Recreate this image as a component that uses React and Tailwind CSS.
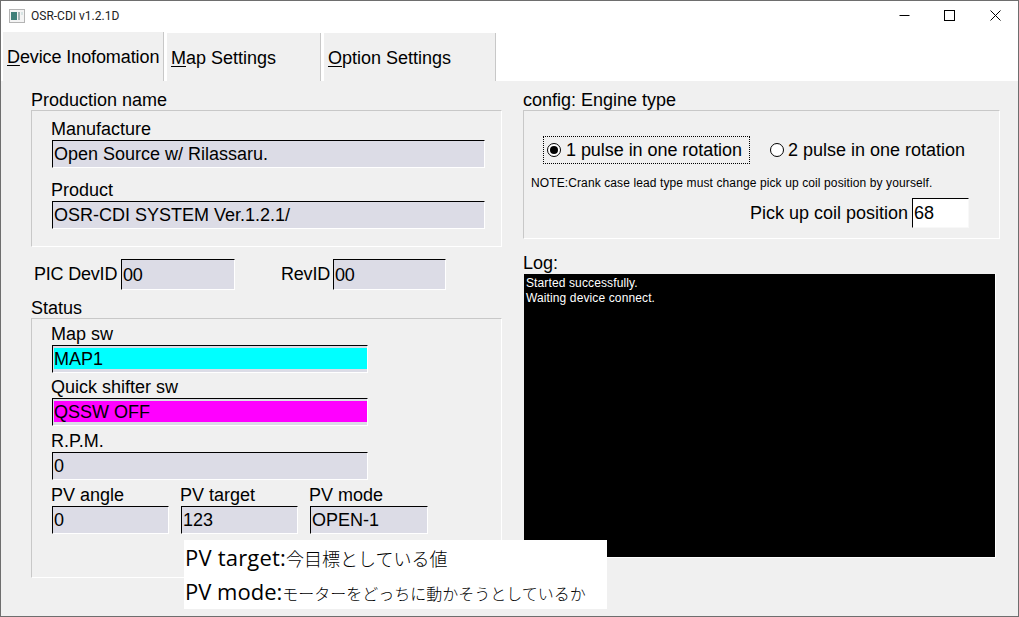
import React from "react";

const FONT = "font-['Liberation_Sans',Arial,sans-serif]";

const Field = ({ value, color, className = "h-[28px]", width }) => (
  <div
    className={`flex items-center border border-t-black border-l-black border-r-white border-b-white bg-[#dcdce6] pl-[1px] text-[18px] leading-none text-black ${className} ${width}`}
  >
    {color ? (
      <div className={`mb-[1px] flex h-[21px] w-full items-center ${color}`}>{value}</div>
    ) : (
      value
    )}
  </div>
);

const Group = ({ title, className, children }) => (
  <div>
    <div className="h-[20px] text-[18px] leading-[20px] text-black">{title}</div>
    <div
      className={`border border-t-[#c8c8c8] border-l-[#c8c8c8] border-r-white border-b-white ${className}`}
    >
      {children}
    </div>
  </div>
);

const Label = ({ children, className = "h-[20px] leading-[18px]" }) => (
  <div className={`-ml-[1px] text-[18px] text-black ${className}`}>{children}</div>
);

const Tab = ({ letter, rest, className }) => (
  <div
    className={`flex items-center border-r border-r-[#c8c8c8] bg-[#f0f0f0] pt-[2px] text-[18px] text-black ${className}`}
  >
    <span className="underline underline-offset-2">{letter}</span>
    {rest}
  </div>
);

const App = () => {
  return (
    <div
      className={`relative flex h-[617px] w-[1019px] flex-col overflow-hidden border border-[#6e6e6e] bg-white ${FONT}`}
    >
      {/* Title bar */}
      <div className="flex h-[31px] shrink-0 items-center bg-white pb-[2px] pl-[8px]">
        <svg width="16" height="14" viewBox="0 0 16 14" className="mr-[6px]">
          <rect x="0.5" y="0.5" width="15" height="13" fill="#f4f4f4" stroke="#b4b4b4" />
          <rect x="2" y="3" width="6" height="8" fill="#3f7f78" />
          <rect x="9" y="3" width="2" height="8" fill="#a4b4b4" />
          <rect x="12" y="3" width="2" height="3" fill="#d8e4e4" />
        </svg>
        <span className="font-['Roboto',sans-serif] text-[12px] text-[#222]">OSR-CDI v1.2.1D</span>
        <div className="ml-auto flex items-center pr-[17px]">
          <svg width="11" height="11" viewBox="0 0 11 11" className="mr-[34px]">
            <path d="M0.5 5.5H10.5" stroke="#000" fill="none" />
          </svg>
          <svg width="11" height="11" viewBox="0 0 11 11" className="mr-[35px]">
            <rect x="0.5" y="0.5" width="10" height="10" stroke="#000" fill="none" />
          </svg>
          <svg width="11" height="11" viewBox="0 0 11 11">
            <path d="M0.5 0.5L10.5 10.5M10.5 0.5L0.5 10.5" stroke="#000" fill="none" />
          </svg>
        </div>
      </div>

      {/* Tabs */}
      <div className="flex h-[49px] shrink-0 items-end bg-white pl-[2px]">
        <Tab
          letter="D"
          rest="evice Inofomation"
          className="h-[49px] w-[161px] pl-[4px] tracking-[-0.1px]"
        />
        <Tab letter="M" rest="ap Settings" className="ml-[3px] h-[48px] w-[154px] pl-[4px]" />
        <Tab letter="O" rest="ption Settings" className="ml-[3px] h-[48px] w-[172px] pl-[4px]" />
      </div>

      {/* Page */}
      <div className="flex flex-1 bg-[#f0f0f0] pl-[30px] pt-[9px]">
        {/* Left column */}
        <div className="w-[471px]">
          <Group title="Production name" className="h-[137px] pl-[20px] pt-[9px]">
            <Label>Manufacture</Label>
            <Field value="Open Source w/ Rilassaru." width="w-[433px]" />
            <Label className="mt-[11px] h-[22px] leading-[22px]">Product</Label>
            <Field value="OSR-CDI SYSTEM Ver.1.2.1/" width="w-[433px]" />
          </Group>

          <div className="mt-[12px] flex h-[31px] items-center pl-[3px] text-[18px] tracking-[-0.2px] text-black">
            <span className="w-[87px]">PIC DevID</span>
            <Field value="00" className="h-[31px]" width="w-[114px]" />
            <span className="ml-[46px] w-[52px]">RevID</span>
            <Field value="00" className="h-[31px]" width="w-[113px]" />
          </div>

          <div className="mt-[8px]">
            <Group title="Status" className="h-[260px] pl-[20px] pt-[6px]">
              <Label>Map sw</Label>
              <Field value="MAP1" color="bg-[#00ffff]" width="w-[316px]" />
              <Label className="mt-[3px] h-[22px] leading-[22px]">Quick shifter sw</Label>
              <Field value="QSSW OFF" color="bg-[#ff00ff]" width="w-[316px]" />
              <Label className="mt-[4px] h-[22px] leading-[22px]">R.P.M.</Label>
              <Field value="0" width="w-[316px]" />
              <div className="mt-[5px] flex">
                <div className="w-[129px]">
                  <Label className="h-[21px] leading-[21px]">PV angle</Label>
                  <Field value="0" width="w-[117px]" />
                </div>
                <div className="w-[129px]">
                  <Label className="h-[21px] leading-[21px]">PV target</Label>
                  <Field value="123" width="w-[117px]" />
                </div>
                <div className="w-[118px]">
                  <Label className="h-[21px] leading-[21px]">PV mode</Label>
                  <Field value="OPEN-1" width="w-[118px]" />
                </div>
              </div>
            </Group>
          </div>
        </div>

        {/* Right column */}
        <div className="ml-[21px] w-[477px]">
          <Group title="config: Engine type" className="h-[129px] pt-[24px]">
            <div className="flex items-center pl-[19px] text-[18px] text-black">
              <div className="flex h-[28px] w-[207px] items-center border border-dotted border-black pl-[3px]">
                <span className="mr-[5px] flex h-[14px] w-[14px] items-center justify-center rounded-full border border-black bg-white">
                  <span className="h-[8px] w-[8px] rounded-full bg-black" />
                </span>
                <span className="pt-[2px] tracking-[-0.05px]">1 pulse in one rotation</span>
              </div>
              <span className="ml-[20px] mr-[4px] h-[14px] w-[14px] rounded-full border border-black bg-white" />
              <span className="pt-[2px]">2 pulse in one rotation</span>
            </div>
            <div className="mt-[11px] whitespace-nowrap pl-[7px] text-[12px] leading-[16px] tracking-[0.11px] text-black">
              NOTE:Crank case lead type must change pick up coil position by yourself.
            </div>
            <div className="mt-[7px] flex items-center justify-end pr-[30px] text-[18px] text-black">
              <span className="mr-[4px]">Pick up coil position</span>
              <div className="flex h-[30px] w-[57px] items-center border border-t-black border-l-black border-r-[#f8f8f8] border-b-[#f8f8f8] bg-white pl-[1px]">
                68
              </div>
            </div>
          </Group>

          <div className="mt-[14px] h-[20px] text-[18px] leading-[20px] text-black">Log:</div>
          <div className="h-[285px] w-[473px] border border-t-[#f0f0f0] border-l-[#f0f0f0] border-r-white border-b-white bg-black px-[2px] pt-[2px] text-[12px] leading-[15px] tracking-[0.12px] text-white">
            <div>Started successfully.</div>
            <div>Waiting device connect.</div>
          </div>
        </div>
      </div>

      {/* Pasted annotation */}
      <div className="absolute left-[183px] top-[539px] flex h-[69px] w-[423px] flex-col whitespace-nowrap bg-white pl-[1px] font-['Open_Sans','Noto_Sans_CJK_JP',sans-serif] text-[22px] leading-[34px] text-black">
        <div className="h-[34px] tracking-[0.2px]">
          PV target:<span className="text-[18px] font-light tracking-normal">今目標としている値</span>
        </div>
        <div className="h-[34px]">
          PV mode:<span className="text-[16px] font-light">モーターをどっちに動かそうとしているか</span>
        </div>
      </div>
    </div>
  );
};

export default App;
